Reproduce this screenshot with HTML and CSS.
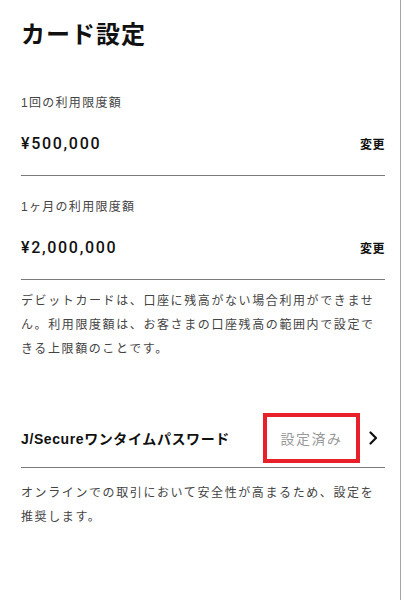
FILE: index.html
```html
<!DOCTYPE html>
<html lang="ja">
<head>
<meta charset="utf-8">
<title>カード設定</title>
<link rel="stylesheet" href="styles.css">
</head>
<body>
<div class="page">
  <h1 class="title">カード設定</h1>

  <section class="limit">
    <div class="limit-label">1回の利用限度額</div>
    <div class="limit-row">
      <span class="limit-value">¥500,000</span>
      <a class="change">変更</a>
    </div>
  </section>

  <section class="limit">
    <div class="limit-label">1ヶ月の利用限度額</div>
    <div class="limit-row">
      <span class="limit-value">¥2,000,000</span>
      <a class="change">変更</a>
    </div>
  </section>

  <p class="note">デビットカードは、口座に残高がない場合利用ができません。利用限度額は、お客さまの口座残高の範囲内で設定できる上限額のことです。</p>

  <div class="secure-row">
    <span class="secure-title">J/Secureワンタイムパスワード</span>
    <span class="status">設定済み</span>
    <svg class="chevron" width="9" height="14" viewBox="0 0 9 14" aria-hidden="true">
      <path d="M1.5 1.5 L7 7 L1.5 12.5" fill="none" stroke="#111" stroke-width="2.2" stroke-linecap="round" stroke-linejoin="round"/>
    </svg>
  </div>

  <p class="note note-secure">オンラインでの取引において安全性が高まるため、設定を推奨します。</p>
</div>
</body>
</html>
```

FILE: styles.css
```css
html, body {
  margin: 0;
  padding: 0;
  background: #fff;
}

body {
  font-family: "Liberation Sans", "Noto Sans CJK JP", sans-serif;
  color: #111;
}

.page {
  box-sizing: border-box;
  width: 401px;
  min-height: 600px;
  padding: 19px 15px 0 21px;
  border-right: 1px solid #a6a6a6;
}

.title {
  margin: 0 0 21px;
  font-size: 24px;
  line-height: 32px;
  font-weight: 700;
  letter-spacing: 1px;
  color: #111;
}

.limit {
  padding: 21px 0 16px;
  border-bottom: 1px solid #7a7a7a;
}

.limit-label {
  font-size: 12px;
  line-height: 20px;
  letter-spacing: 1.3px;
  color: #444;
}

.limit-row {
  margin-top: 14px;
  height: 32px;
  display: flex;
  align-items: center;
  justify-content: space-between;
}

.limit-value {
  font-family: Roboto, "Liberation Sans", sans-serif;
  font-size: 16px;
  font-weight: 500;
  letter-spacing: 1.7px;
  color: #111;
}

.change {
  font-size: 12px;
  font-weight: 700;
  letter-spacing: 0.5px;
  color: #111;
  margin-top: 1px;
}

.note {
  margin: 9px 0 0;
  font-size: 12px;
  line-height: 24px;
  letter-spacing: 1.6px;
  color: #444;
}

.secure-row {
  margin-top: 52px;
  padding-bottom: 4px;
  display: flex;
  align-items: center;
  border-bottom: 1px solid #7a7a7a;
}

.secure-title {
  flex: 1;
  font-size: 14px;
  font-weight: 700;
  letter-spacing: 0.6px;
  color: #111;
}

.status {
  box-sizing: border-box;
  width: 97px;
  height: 50px;
  display: flex;
  align-items: center;
  justify-content: center;
  border: 4px solid #e8202a;
  font-size: 14px;
  letter-spacing: 1.5px;
  color: #9a9a9a;
}

.chevron {
  display: block;
  margin: 0 7px 0 9px;
}

.note-secure {
  margin-top: 13px;
}
```
